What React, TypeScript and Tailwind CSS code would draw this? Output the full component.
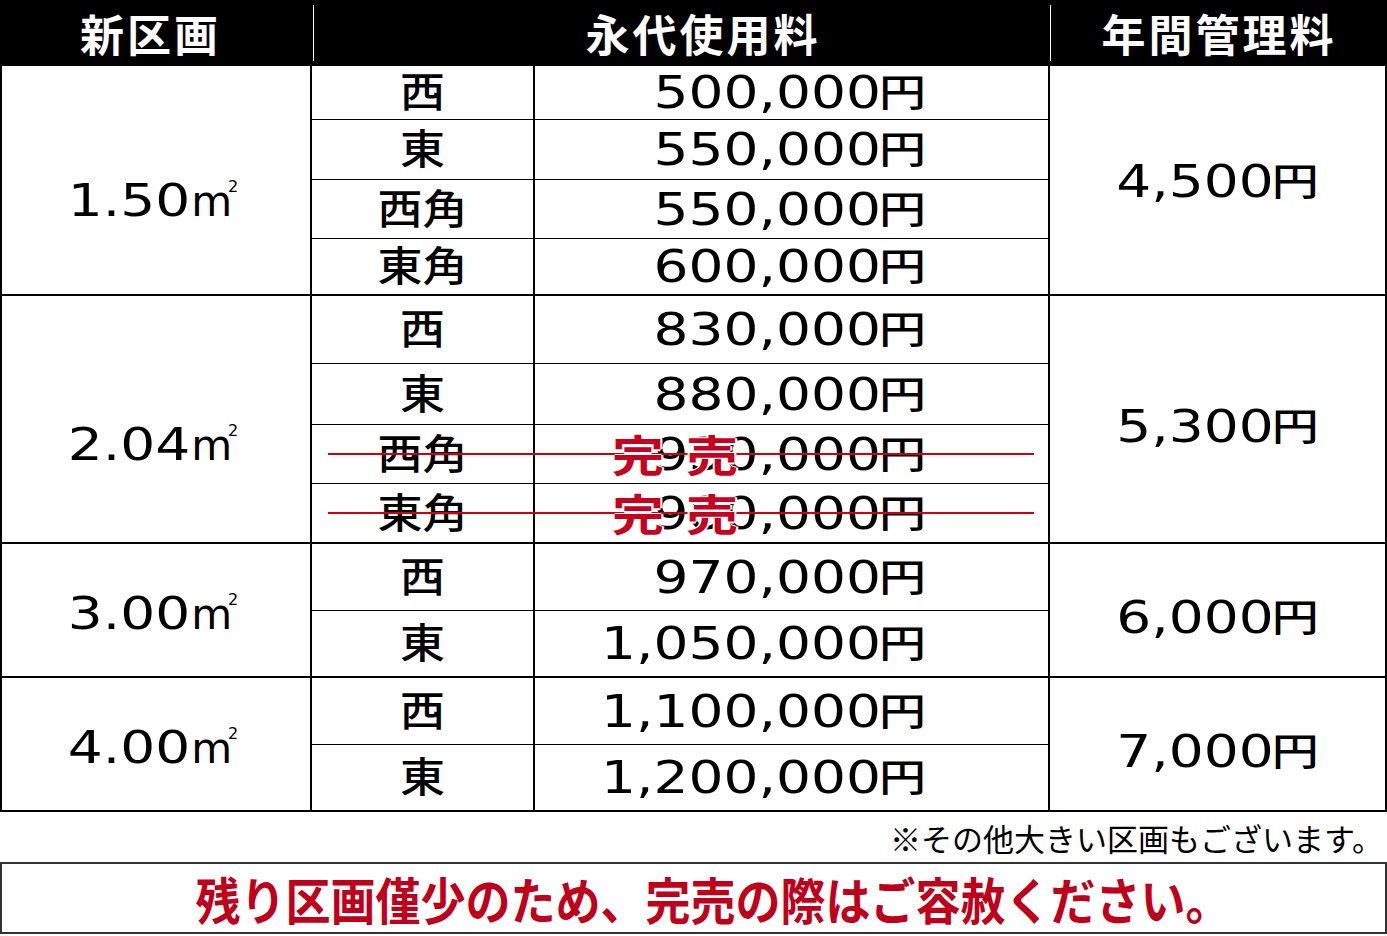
import React from "react";

const NUM = "font-['DejaVu_Sans',sans-serif]";
const JP = "font-['Noto_Sans_CJK_JP',sans-serif]";

type Row = { d: string; p: string; h: string; sold?: boolean };
type Group = { area: string; fee: string; areaPad: string; feePad: string; rows: Row[] };

const groups: Group[] = [
  {
    area: "1.50",
    fee: "4,500",
    areaPad: "pt-[34px]",
    feePad: "pt-[2px]",
    rows: [
      { d: "西", p: "500,000", h: "h-[54px]" },
      { d: "東", p: "550,000", h: "h-[60px]" },
      { d: "西角", p: "550,000", h: "h-[59px]" },
      { d: "東角", p: "600,000", h: "h-[55px]" },
    ],
  },
  {
    area: "2.04",
    fee: "5,300",
    areaPad: "pt-[44px]",
    feePad: "pt-[14px]",
    rows: [
      { d: "西", p: "830,000", h: "h-[68px]" },
      { d: "東", p: "880,000", h: "h-[61px]" },
      { d: "西角", p: "930,000", h: "h-[59px]", sold: true },
      { d: "東角", p: "980,000", h: "h-[58px]", sold: true },
    ],
  },
  {
    area: "3.00",
    fee: "6,000",
    areaPad: "pt-0",
    feePad: "pt-[14px]",
    rows: [
      { d: "西", p: "970,000", h: "h-[67px]" },
      { d: "東", p: "1,050,000", h: "h-[65px]" },
    ],
  },
  {
    area: "4.00",
    fee: "7,000",
    areaPad: "pt-0",
    feePad: "pt-[14px]",
    rows: [
      { d: "西", p: "1,100,000", h: "h-[67px]" },
      { d: "東", p: "1,200,000", h: "h-[65px]" },
    ],
  },
];

function Yen({ v }: { v: string }) {
  return (
    <span className="inline-flex items-center text-black">
      <span className={`${NUM} inline-block text-[55px] leading-none scale-y-[0.82]`}>{v}</span>
      <span className={`${JP} inline-block text-[47px] leading-none font-medium scale-y-[0.8] -translate-y-[3px] -ml-[2px]`}>円</span>
    </span>
  );
}

function Area({ v }: { v: string }) {
  return (
    <span className="inline-flex items-baseline text-black">
      <span className={`${NUM} inline-block text-[55px] leading-none scale-y-[0.82] origin-[50%_84.5%]`}>{v}</span>
      <span className={`${NUM} text-[42px] leading-none font-medium ml-[1px]`}>m</span>
      <span className={`${NUM} relative -top-[24px] -ml-[4px] text-[16px] leading-none`}>2</span>
    </span>
  );
}

export default function App() {
  return (
    <div className="w-[1387px] h-[936px] overflow-hidden bg-white">
      {/* header */}
      <div className={`${JP} flex h-[66px] bg-black text-white`}>
        <div className="flex w-[313px] items-center justify-center pr-[12px]">
          <span className="text-[44px] leading-none font-semibold tracking-[3px]">新区画</span>
        </div>
        <div className="my-[5px] w-px bg-white" />
        <div className="flex w-[736px] items-center justify-center pl-[42px]">
          <span className="text-[44px] leading-none font-semibold tracking-[3px]">永代使用料</span>
        </div>
        <div className="my-[5px] w-px bg-white" />
        <div className="flex flex-1 items-center justify-center">
          <span className="text-[44px] leading-none font-semibold tracking-[3px]">年間管理料</span>
        </div>
      </div>

      {/* price table */}
      <div className="border-x-2 border-black">
        {groups.map((g) => (
          <div key={g.area} className="flex border-b-2 border-black">
            <div className={`flex w-[310px] items-center justify-center border-r-2 border-black pr-[6px] ${g.areaPad}`}>
              <Area v={g.area} />
            </div>
            <div className="flex w-[736px] flex-col">
              {g.rows.map((r, i) => (
                <div
                  key={r.d}
                  className={`relative flex ${r.h} ${i < g.rows.length - 1 ? "border-b border-black" : ""}`}
                >
                  <div className="flex w-[223px] items-center justify-center border-r-2 border-black">
                    <span className={`${JP} inline-block text-[45px] leading-none font-medium text-black scale-y-[0.9] -translate-y-[3px]`}>
                      {r.d}
                    </span>
                  </div>
                  <div className="relative flex flex-1 items-center justify-end pr-[122px]">
                    <Yen v={r.p} />
                  </div>
                  {r.sold ? (
                    <>
                      <div className="absolute left-[16px] right-[14px] top-1/2 h-[2px] -translate-y-1/2 bg-[#d2000f]" />
                      <div className="absolute inset-y-0 left-[300px] flex items-center">
                        <span
                          className={`${JP} inline-block text-[52px] leading-none font-bold tracking-[22px] text-[#c8001e] scale-y-[0.84] [text-shadow:-2px_0_#fff,2px_0_#fff,0_-2px_#fff,0_2px_#fff]`}
                        >
                          完売
                        </span>
                      </div>
                    </>
                  ) : null}
                </div>
              ))}
            </div>
            <div className={`flex flex-1 items-center justify-center border-l-2 border-black ${g.feePad}`}>
              <Yen v={g.fee} />
            </div>
          </div>
        ))}
      </div>

      {/* note */}
      <div className={`${JP} flex h-[50px] items-center justify-end pr-[4px] text-[31px] leading-none text-black`}>
        ※その他大きい区画もございます。
      </div>

      {/* banner */}
      <div className="flex h-[72px] items-center justify-center border-2 border-[#333]">
        <span
          className={`${JP} ml-[38px] inline-block scale-x-[0.9] text-[50px] leading-none font-bold text-[#c0001a]`}
        >
          残り区画僅少のため、完売の際はご容赦ください。
        </span>
      </div>
    </div>
  );
}
